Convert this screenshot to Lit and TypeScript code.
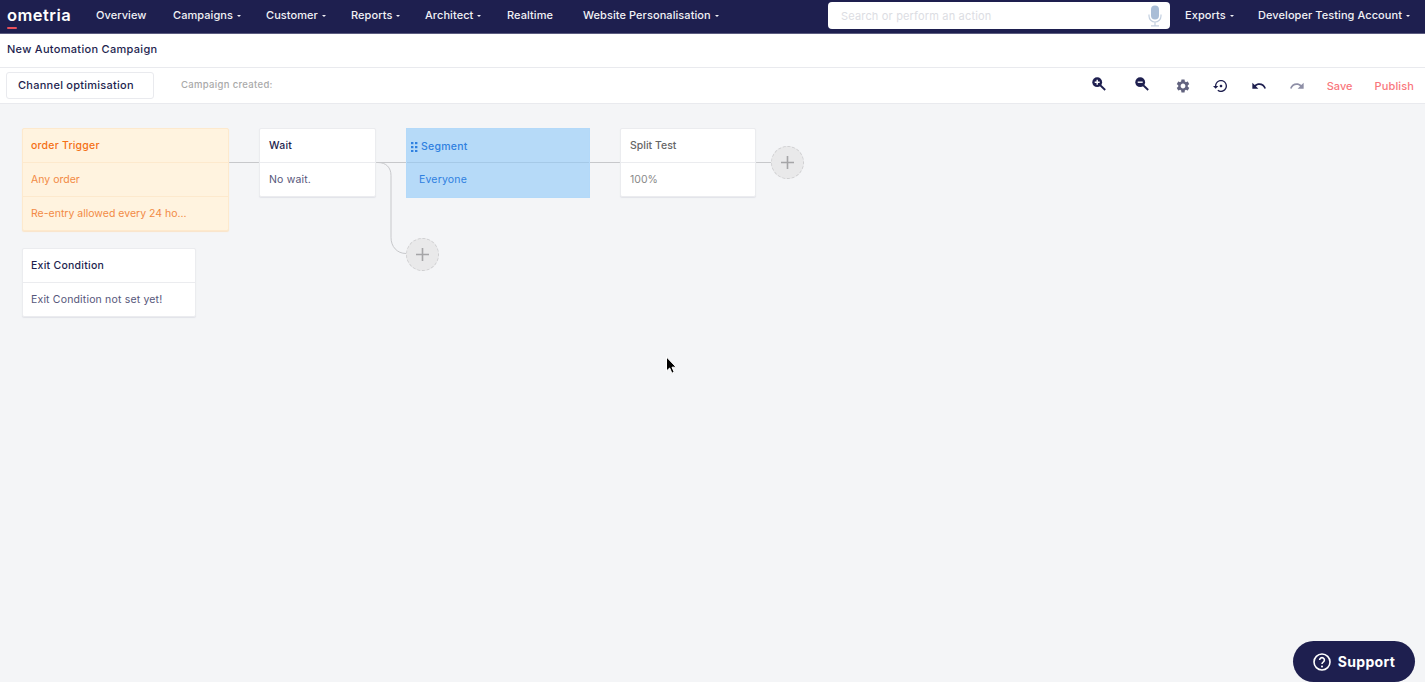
import { LitElement, css, html, svg } from 'lit';
import { customElement } from 'lit/decorators.js';

interface NavItem {
  label: string;
  caret: boolean;
}

const NAV_LEFT: NavItem[] = [
  { label: 'Overview', caret: false },
  { label: 'Campaigns', caret: true },
  { label: 'Customer', caret: true },
  { label: 'Reports', caret: true },
  { label: 'Architect', caret: true },
  { label: 'Realtime', caret: false },
  { label: 'Website Personalisation', caret: true },
];

const GEAR =
  'M19.14 12.94c.04-.3.06-.61.06-.94 0-.32-.02-.64-.07-.94l2.03-1.58c.18-.14.23-.41.12-.61l-1.92-3.32c-.12-.22-.37-.29-.59-.22l-2.39.96c-.5-.38-1.03-.7-1.62-.94l-.36-2.54c-.04-.24-.24-.41-.48-.41h-3.84c-.24 0-.43.17-.47.41l-.36 2.54c-.59.24-1.13.57-1.62.94l-2.39-.96c-.22-.08-.47 0-.59.22L2.74 8.87c-.12.21-.08.47.12.61l2.03 1.58c-.05.3-.09.63-.09.94s.02.64.07.94l-2.03 1.58c-.18.14-.23.41-.12.61l1.92 3.32c.12.22.37.29.59.22l2.39-.96c.5.38 1.03.7 1.62.94l.36 2.54c.05.24.24.41.48.41h3.84c.24 0 .44-.17.47-.41l.36-2.54c.59-.24 1.13-.56 1.62-.94l2.39.96c.22.08.47 0 .59-.22l1.92-3.32c.12-.22.07-.47-.12-.61l-2.01-1.58zM12 15.6c-1.98 0-3.6-1.62-3.6-3.6s1.62-3.6 3.6-3.6 3.6 1.62 3.6 3.6-1.62 3.6-3.6 3.6z';
const RESTORE =
  'M14 12c0-1.1-.9-2-2-2s-2 .9-2 2 .9 2 2 2 2-.9 2-2zm-2-9c-4.97 0-9 4.03-9 9H0l4 4 4-4H5c0-3.87 3.13-7 7-7s7 3.13 7 7-3.13 7-7 7c-1.51 0-2.91-.49-4.06-1.3l-1.42 1.44C8.04 20.3 9.94 21 12 21c4.97 0 9-4.03 9-9s-4.03-9-9-9z';
const UNDO =
  'M12.5 8c-2.65 0-5.05.99-6.9 2.6L2 7v9h9l-3.62-3.62c1.39-1.16 3.16-1.88 5.12-1.88 3.54 0 6.55 2.31 7.6 5.5l2.37-.78C21.08 11.03 17.15 8 12.5 8z';

@customElement('app-root')
export class AppRoot extends LitElement {
  static styles = css`
    :host {
      display: block;
      position: relative;
      height: 682px;
      overflow: hidden;
      background: #f4f5f7;
      font-family: Inter, 'Open Sans', sans-serif;
      font-size: 10.5px;
      color: #1e1f4f;
    }

    .nav {
      height: 33px;
      background: #1e1f4f;
      border-bottom: 1px solid #5c5c80;
      display: grid;
      grid-template-columns: 96px 77px 93px 85px 74px 82px 76px 245px 357px 73px auto;
      align-items: center;
      color: #f1f1f5;
      font-size: 11px;
      font-weight: 500;
      letter-spacing: 0.07px;
      white-space: nowrap;
    }

    .nav > div {
      margin-top: -3px;
    }

    .nav > .logo {
      position: relative;
      padding-left: 7px;
      font-size: 16.5px;
      font-weight: 600;
      letter-spacing: 0.45px;
      color: #fff;
      line-height: 20px;
      margin-top: -3px;
    }

    .logo::after {
      content: '';
      position: absolute;
      left: 7px;
      top: 22px;
      width: 10px;
      height: 2px;
      border-radius: 1px;
      background: #e8505b;
    }

    .caret {
      display: inline-block;
      margin-left: 4px;
      vertical-align: 2px;
      border-left: 2px solid transparent;
      border-right: 2px solid transparent;
      border-top: 2px solid #f1f1f5;
    }

    .nav > .search {
      width: 342px;
      height: 27px;
      box-sizing: border-box;
      background: #fff;
      border-radius: 4px;
      margin-top: -2px;
      padding: 0 8px 0 13px;
      display: flex;
      align-items: center;
      justify-content: space-between;
      color: #dcdde3;
      font-weight: 400;
      font-size: 11px;
      letter-spacing: 0.17px;
    }

    .title {
      height: 34px;
      background: #fff;
      border-bottom: 1px solid #e9eaee;
      padding: 0 0 3px 7px;
      box-sizing: border-box;
      display: flex;
      align-items: center;
      font-weight: 500;
      font-size: 11px;
      letter-spacing: 0.3px;
    }

    .toolbar {
      height: 35px;
      background: #fff;
      border-bottom: 1px solid #e9eaee;
      display: flex;
      align-items: center;
      padding: 0 11px 0 6px;
    }

    .channel {
      width: 148px;
      height: 27px;
      box-sizing: border-box;
      border: 1px solid #e9eaee;
      border-radius: 3px;
      display: flex;
      align-items: center;
      padding: 0 0 2px 11px;
      font-size: 11px;
      font-weight: 500;
      letter-spacing: 0.25px;
    }

    .created {
      margin-left: 27px;
      font-size: 9.5px;
      font-weight: 500;
      letter-spacing: 0.33px;
      color: #a9a9a9;
      margin-top: -3px;
    }

    .tools {
      margin-left: auto;
      display: flex;
      align-items: center;
    }

    .tools svg {
      display: block;
    }

    .zoom-in {
      margin-right: 29px;
      margin-top: -4px;
    }

    .zoom-out {
      margin-right: 26px;
      margin-top: -4px;
    }

    .gear,
    .restore,
    .undo,
    .redo {
      margin-right: 22px;
    }

    .action {
      color: #f9777d;
      font-size: 11px;
      font-weight: 500;
      letter-spacing: 0.13px;
    }

    .save {
      margin-right: 22px;
      letter-spacing: 0;
    }

    .canvas {
      position: relative;
      height: 578px;
    }

    .wires {
      position: absolute;
      left: 0;
      top: 0;
    }

    .card {
      position: absolute;
      box-sizing: border-box;
      background: #fff;
      border: 1px solid #ebecef;
      border-radius: 2px;
      box-shadow: 0 1px 1px #e2e3e8;
    }

    .card .row {
      height: 34px;
      box-sizing: border-box;
      display: flex;
      align-items: center;
      padding-left: 8px;
      border-top: 1px solid #ebecef;
      color: #56567a;
      font-size: 10.5px;
      letter-spacing: 0.17px;
      white-space: nowrap;
    }

    .card .row.head {
      height: 33px;
      border-top: 0;
      color: #1e1f4f;
      font-weight: 500;
      letter-spacing: 0.25px;
    }

    .trigger {
      left: 22px;
      top: 24px;
      width: 207px;
      background: #fff3df;
      border-color: #fde9cd;
      box-shadow: 0 1px 1px #fae4c8;
    }

    .card.trigger .row {
      border-top-color: #fde9cd;
      color: #f28a45;
      letter-spacing: 0;
    }

    .card.trigger .row.head {
      color: #f47016;
      letter-spacing: 0.2px;
    }

    .wait {
      left: 259px;
      top: 24px;
      width: 117px;
    }

    .card.wait .row,
    .card.split .row {
      padding-left: 9px;
    }

    .card.segment {
      left: 406px;
      top: 24px;
      width: 184px;
      height: 70px;
      background: rgba(144, 202, 249, 0.62);
      border: 1px solid #b3d9f9;
      border-radius: 0;
      box-shadow: none;
    }

    .card.segment .row {
      height: 31px;
      border-top: 0;
      color: #2f80e0;
      padding-left: 12px;
    }

    .card.segment .row.head {
      color: #2f80e0;
      padding-left: 4px;
      gap: 3px;
      height: 35px;
    }

    .split {
      left: 620px;
      top: 24px;
      width: 136px;
    }

    .card.split .row {
      color: #8a8a8a;
      letter-spacing: 0;
    }

    .card.split .row.head {
      color: #666;
      letter-spacing: 0;
    }

    .exit {
      left: 22px;
      top: 144px;
      width: 174px;
    }

    .add {
      position: absolute;
      width: 33px;
      height: 33px;
      box-sizing: border-box;
      border-radius: 50%;
      background: #e9e9ea;
      border: 1px dashed #cfcfd1;
      display: flex;
      align-items: center;
      justify-content: center;
    }

    .cursor {
      position: absolute;
      left: 665px;
      top: 252px;
    }

    .support {
      position: absolute;
      right: 10px;
      bottom: 0;
      width: 122px;
      height: 41px;
      border-radius: 21px;
      background: #1e1f4f;
      color: #fff;
      display: flex;
      align-items: center;
      justify-content: center;
      gap: 7px;
      font-size: 14px;
      font-weight: 700;
      letter-spacing: 0.3px;
    }
  `;

  render() {
    return html`
      <div class="nav">
        <div class="logo">ometria</div>
        ${NAV_LEFT.map((item) => this.navItem(item))}
        <div class="search">
          <span>Search or perform an action</span>
          ${this.mic()}
        </div>
        ${this.navItem({ label: 'Exports', caret: true })}
        ${this.navItem({ label: 'Developer Testing Account', caret: true })}
      </div>
      <div class="title">New Automation Campaign</div>
      <div class="toolbar">
        <div class="channel">Channel optimisation</div>
        <div class="created">Campaign created:</div>
        <div class="tools">
          ${this.magnifier(true)} ${this.magnifier(false)}
          ${this.icon(GEAR, '#62637f', 'gear')} ${this.icon(RESTORE, '#1e1f4f', 'restore')}
          ${this.icon(UNDO, '#1e1f4f', 'undo')} ${this.icon(UNDO, '#8e8fa6', 'redo', true)}
          <span class="action save">Save</span>
          <span class="action">Publish</span>
        </div>
      </div>
      <div class="canvas">
        ${this.wires()}
        <div class="card trigger">
          <div class="row head">order Trigger</div>
          <div class="row">Any order</div>
          <div class="row">Re-entry allowed every 24 ho...</div>
        </div>
        <div class="card wait">
          <div class="row head">Wait</div>
          <div class="row">No wait.</div>
        </div>
        <div class="card segment">
          <div class="row head">${this.grip()}Segment</div>
          <div class="row">Everyone</div>
        </div>
        <div class="card split">
          <div class="row head">Split Test</div>
          <div class="row">100%</div>
        </div>
        <div class="card exit">
          <div class="row head">Exit Condition</div>
          <div class="row">Exit Condition not set yet!</div>
        </div>
        ${this.addButton(771, 42)} ${this.addButton(406, 134)}
        <svg class="cursor" width="13" height="20" viewBox="0 0 13 20">
          <path
            d="M1.5 1v14l3.2-3 2.2 5.2 2.3-1-2.2-5h4.2z"
            fill="#000"
            stroke="#fff"
            stroke-width="1"
          />
        </svg>
      </div>
      <div class="support">
        <svg width="18" height="18" viewBox="0 0 18 18" fill="none" stroke="#fff">
          <circle cx="9" cy="9" r="8" stroke-width="1.6" />
          <path d="M6.6 7a2.4 2.4 0 1 1 3.6 2.1c-.8.5-1.2 1-1.2 1.9" stroke-width="1.6" />
          <circle cx="9" cy="13.4" r="1" fill="#fff" stroke="none" />
        </svg>
        Support
      </div>
    `;
  }

  private navItem(item: NavItem) {
    return html`<div>${item.label}${item.caret ? html`<i class="caret"></i>` : ''}</div>`;
  }

  private mic() {
    return html`<svg width="14" height="22" viewBox="0 0 14 22" fill="none">
      <rect x="3" y="0.5" width="8" height="14" rx="4" fill="#a9bdd6" />
      <path d="M1 9.5v1.5a6 6 0 0 0 12 0V9.5M7 17v3.5M3 20.8h8" stroke="#c3d0e0" stroke-width="1.2" />
    </svg>`;
  }

  private magnifier(plus: boolean) {
    return html`<svg
      class=${plus ? 'zoom-in' : 'zoom-out'}
      width="14"
      height="14"
      viewBox="0 0 14 14"
    >
      <path d="M8 8l5.2 5" stroke="#1e1f4f" stroke-width="1.8" />
      <circle cx="5.2" cy="5.2" r="4.9" fill="#1e1f4f" />
      <path d=${plus ? 'M2.7 5.2h5M5.2 2.7v5' : 'M2.7 5.2h5'} stroke="#fff" stroke-width="1.4" />
    </svg>`;
  }

  private icon(d: string, fill: string, name: string, flip = false) {
    return html`<svg class=${name} width="16" height="16" viewBox="0 0 24 24" fill=${fill}>
      ${svg`<path d=${d} transform=${flip ? 'matrix(-1 0 0 1 24 0)' : ''} />`}
    </svg>`;
  }

  private grip() {
    return html`<svg width="7" height="10" viewBox="0 0 7 10" fill="#2f80e0">
      ${[0, 4, 8].map(
        (y) => svg`<rect x="0" y=${y} width="2.4" height="2.2" /><rect x="4" y=${y} width="2.4" height="2.2" />`,
      )}
    </svg>`;
  }

  private wires() {
    return html`<svg class="wires" width="820" height="180" fill="none" stroke="#c7c8cb">
      <path d="M229 58.5h30M376 58.5h244M756 58.5h15" />
      <path d="M376 58.5h2c8 0 13 5 13 13v62c0 9 6 16 15 16" />
    </svg>`;
  }

  private addButton(x: number, y: number) {
    return html`<div class="add" style="left:${x}px;top:${y}px">
      <svg width="15" height="15" viewBox="0 0 15 15">
        <path d="M7.5 1v13M1 7.5h13" stroke="#a5a5a7" stroke-width="1.6" />
      </svg>
    </div>`;
  }
}

declare global {
  interface HTMLElementTagNameMap {
    'app-root': AppRoot;
  }
}
